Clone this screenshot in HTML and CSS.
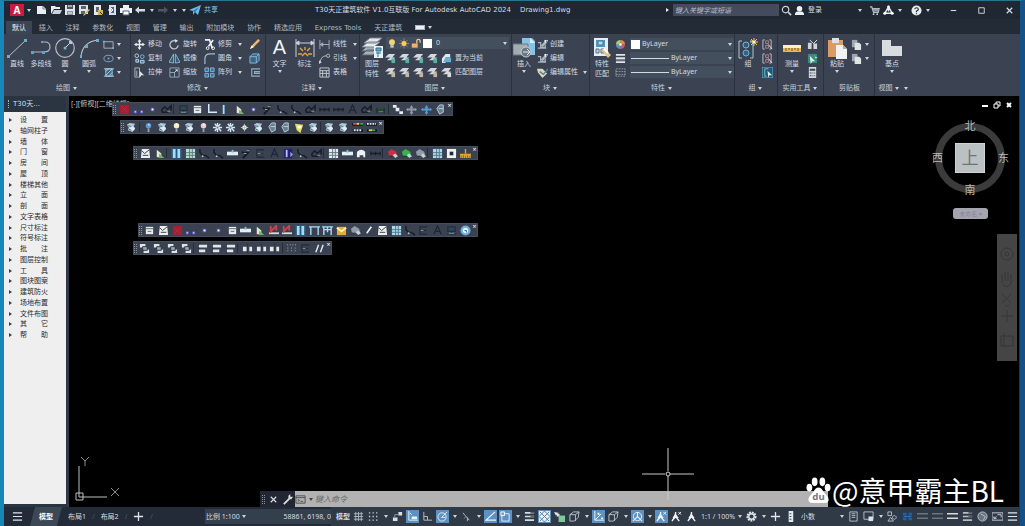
FILE: index.html
```html
<!DOCTYPE html>
<html lang="zh-CN">
<head>
<meta charset="utf-8">
<title>T30天正建筑软件 - Drawing1.dwg</title>
<link rel="stylesheet" href="styles.css">
</head>
<body>
<svg class="defs" aria-hidden="true">
<defs>
<!-- file icons -->
<symbol id="new" viewBox="0 0 12 12"><path d="M1 2h6l3 3v5H1z" fill="#e9eef2"/><path d="M7 2v3h3" stroke="#78838e" fill="none"/></symbol>
<symbol id="open" viewBox="0 0 12 12"><path d="M1 10V2h4l1 1h4v2H4z" fill="#e9eef2"/><path d="M4 6h8l-2 4H2z" fill="#c9d2da"/></symbol>
<symbol id="save" viewBox="0 0 12 12"><path d="M1 1h10v10H1z" fill="#e0e5ea"/><path d="M3 1h6v4H3z" fill="#4b5664"/><path d="M3 7h6v4H3z" fill="#8592a0"/><path d="M4 2h4M4 9h4" stroke="#fff"/></symbol>
<symbol id="saveas" viewBox="0 0 12 12"><path d="M1 1h9v9H1z" fill="#dfe3e6"/><path d="M3 2h5v3H3zM3 7h4v3H3z" fill="#596470"/><path d="M6 10l5-5 1 1-5 5-2 1z" fill="#d6b35d"/></symbol>
<symbol id="sheet" viewBox="0 0 12 12"><path d="M2 1h7v10H2z" fill="#e6e9eb"/><path d="M4 3h3v5H4z" fill="#5d6874"/><path d="M6 6h5v5H6z" fill="#d6b44b"/><path d="M8 8l3 3" stroke="#333"/></symbol>
<symbol id="phone" viewBox="0 0 12 12"><path d="M3 1h7v10H3z" fill="#d8e2ec"/><path d="M5 3h3v6H5z" fill="#486784"/><path d="M2 6h5M5 4l2 2-2 2" stroke="#fff" fill="none"/></symbol>
<symbol id="print" viewBox="0 0 12 12"><path d="M3 1h6v3H3zM0 4h12v5H0z" fill="#eef1f3"/><path d="M3 7h6v4H3z" fill="#fff" stroke="#58626e"/></symbol>
<symbol id="undo" viewBox="0 0 12 12"><path d="M1 6l4-3.500V5h6v2.500H5V9.500z" fill="currentColor"/></symbol>
<symbol id="redo" viewBox="0 0 12 12"><path d="M11 6L7 2.500V5H1v2.500h6V9.500z" fill="currentColor"/></symbol>
<symbol id="plane" viewBox="0 0 12 12"><path d="M0 6L12 1 9 11 6 8l-2 3V7z" fill="#68bce8"/><path d="M4 7l6-4-4 5" fill="#2e6f98"/></symbol>
<symbol id="search" viewBox="0 0 12 12"><circle cx="5" cy="5" r="3.500" fill="none" stroke="#cbd3da" stroke-width="1.300"/><path d="M8 8l3 3" stroke="#cbd3da" stroke-width="1.800"/></symbol>
<symbol id="user" viewBox="0 0 12 12"><circle cx="6" cy="4" r="3" fill="#eef1f4"/><path d="M1 11q0-4 3-4h4q3 0 3 4z" fill="#eef1f4"/></symbol>
<symbol id="cart" viewBox="0 0 12 12"><path d="M1 2h2l2 6h5l1-4H4" fill="none" stroke="#b9c2ca" stroke-width="1.400"/><path d="M4 4h7l-1 3H5z" fill="#929daa"/><circle cx="5" cy="10" r="1" fill="#ccd"/><circle cx="9" cy="10" r="1" fill="#ccd"/></symbol>
<symbol id="hub" viewBox="0 0 12 12"><path d="M6 2L2 9h8zM6 3v4" fill="none" stroke="#e7ebee" stroke-width="1.600"/><circle cx="6" cy="2" r="1.500" fill="#fff"/><circle cx="2" cy="9" r="1.700" fill="#fff"/><circle cx="10" cy="9" r="1.700" fill="#fff"/></symbol>
<symbol id="help" viewBox="0 0 12 12"><circle cx="6" cy="6" r="5.500" fill="#e8edf0"/><path d="M4 4.500Q4.500 3 6 3q2 0 2 1.500Q8 6 6 6.500V8M6 9v1" fill="none" stroke="#26303d" stroke-width="1.300"/></symbol>
<symbol id="min" viewBox="0 0 12 12"><path d="M3 6h6" stroke="currentColor" stroke-width="1.200"/></symbol>
<symbol id="max" viewBox="0 0 12 12"><path d="M3 3h6v6H3z" fill="none" stroke="currentColor"/></symbol>
<symbol id="close" viewBox="0 0 12 12"><path d="M3 3l6 6M9 3L3 9" stroke="currentColor" stroke-width="1.300"/></symbol>
<!-- large ribbon icons -->
<symbol id="line" viewBox="0 0 22 22"><path d="M2 20L20 3" stroke="#b9c2ca"/><path d="M1 18h3v3H1zM18 2h3v3h-3z" fill="#73aaca"/></symbol>
<symbol id="pline" viewBox="0 0 22 22"><path d="M11 5h4q5 0 5 5t-6 5H2" fill="none" stroke="#aeb7c0" stroke-width="1.200"/><path d="M11 4h2v2h-2zM1 14h3v3H1zM12 14h3v3h-3z" fill="#659fc5"/></symbol>
<symbol id="circle" viewBox="0 0 22 22"><circle cx="11" cy="11" r="9.300" fill="none" stroke="#b9c0c8" stroke-width="1.200"/><path d="M11 11l5-5" stroke="#d0d9df"/><circle cx="11" cy="11" r="1.500" fill="#73b3da"/><path d="M15 4h3v3h-3z" fill="#a9c9dc"/></symbol>
<symbol id="arc" viewBox="0 0 22 22"><path d="M3 20Q4 5 20 3" fill="none" stroke="#b9c0c8" stroke-width="1.200"/><path d="M2 18h2v3H2zM7 8h3v3H7zM18 2h3v3h-3z" fill="#73aaca"/></symbol>
<symbol id="dim" viewBox="0 0 22 22"><path d="M2 2v18M20 2v18M2 6h18M2 6l3-2v4zM20 6l-3-2v4z" fill="#ccd2d9" stroke="#ccd2d9"/><path d="M11 10v3M6 11l3 3M16 11l-3 3M4 17h4M14 17h4M11 16l-3 3M11 16l3 3" stroke="#e2a53d" stroke-width="1.400"/></symbol>
<symbol id="layers" viewBox="0 0 22 22"><path d="M1 18l5-5h11l-5 5zM1 14l5-5h11l-5 5z" fill="#a8b0b8" stroke="#596370"/><path d="M1 10l6-5h12l-6 5zM3 6l6-5h12l-6 5z" fill="#e6e9eb" stroke="#778391"/><path d="M13 9h9v12h-9z" fill="#e6f1f6"/><path d="M15 11h5v3h-5zM15 16h5M17 15v5" fill="#5dabc7" stroke="#36728b"/></symbol>
<symbol id="insert" viewBox="0 0 22 22"><path d="M9 1h10l3 3v14H9z" fill="#84c4e8"/><path d="M17 1v5h5" fill="#d9f0fc"/><path d="M0 7h15v11H0z" fill="#a3acb3" stroke="#6d7781"/><circle cx="13" cy="15" r="5" fill="#687782" stroke="#c5cfd5"/><path d="M10 15h6M14 12l3 3-3 3" fill="none" stroke="#dfe6ea"/></symbol>
<symbol id="match" viewBox="0 0 22 22"><path d="M3 1h14v18H3z" fill="#e5eef5"/><path d="M5 3h9v7H5z" fill="#4b99ca"/><path d="M7 4h5v4H7zM5 12h3v4H5zM10 12h3v4h-3z" fill="#a7dcf5" stroke="#5c6e7d"/><path d="M10 13l3-2 7 7-3 3z" fill="#e8c181"/><path d="M13 12l4 4" stroke="#fff" stroke-width="2"/></symbol>
<symbol id="group" viewBox="0 0 22 22"><path d="M5 4H2v17h3M13 4h3v17h-3" fill="none" stroke="#a8c4d8"/><circle cx="9" cy="8" r="3" fill="#355b7b" stroke="#7bb1d5"/><circle cx="9" cy="16" r="3" fill="#2b668f" stroke="#6fb0d5"/><path d="M17 1v8M13 5h8M14 2l6 6M20 2l-6 6" stroke="#f4bf65"/><circle cx="17" cy="5" r="1.500" fill="#fff3d4"/></symbol>
<symbol id="measure" viewBox="0 0 22 22"><path d="M2 8h18v7H2z" fill="#e8b45c"/><path d="M2 8h18v3H2z" fill="#fff0bd"/><path d="M5 11v3M8 11v2M11 11v3M14 11v2M17 11v3" stroke="#765c30"/></symbol>
<symbol id="paste" viewBox="0 0 22 22"><path d="M2 3h15v17H2z" fill="#d99d64"/><path d="M6 1h7v5H6z" fill="#dce1e3"/><path d="M10 8h7l4 4v10H10z" fill="#f0f2f3"/><path d="M17 8v4h4" fill="#a4adb6"/></symbol>
<symbol id="base" viewBox="0 0 22 22"><path d="M1 3h9v6h11v10H1z" fill="#d9dcde"/></symbol>
<!-- small ribbon icons -->
<symbol id="rect" viewBox="0 0 12 12"><path d="M1 3h10v7H1z" fill="none" stroke="#aab7c3"/><path d="M0 2h2v2H0zM10 9h2v2h-2z" fill="#65b3df"/></symbol>
<symbol id="ellipse" viewBox="0 0 12 12"><ellipse cx="6" cy="6" rx="5" ry="3.500" fill="none" stroke="#8cacc1"/><path d="M5 5h2v2H5z" fill="#60a9d7"/></symbol>
<symbol id="hatch" viewBox="0 0 12 12"><path d="M3 2h7v8H3z" fill="#46647a" stroke="#8cc9e7"/><path d="M3 5l3-3M3 9l7-7M6 10l4-4M1 2h11M1 10h11" stroke="#a9d3e6"/></symbol>
<symbol id="move" viewBox="0 0 12 12"><path d="M6 1v10M1 6h10" stroke="#e7ecef" stroke-width="1.500"/><path d="M6 0l2 3H4zM6 12L4 9h4zM0 6l3-2v4zM12 6L9 4v4z" fill="#e7ecef"/></symbol>
<symbol id="rotate" viewBox="0 0 12 12"><path d="M10 7a4.500 4.500 0 1 1-3-5" fill="none" stroke="#bdc9d3" stroke-width="1.400"/><path d="M6 0l4 2-3 2z" fill="#d4e3eb"/></symbol>
<symbol id="trim" viewBox="0 0 12 12"><path d="M1 1h5l3 9M10 1L5 8" stroke="#eef1f3" stroke-width="1.800" fill="none"/><circle cx="4" cy="10" r="1.500" fill="none" stroke="#fff"/><circle cx="10" cy="10" r="1.500" fill="none" stroke="#fff"/></symbol>
<symbol id="copy" viewBox="0 0 12 12"><circle cx="3" cy="3" r="2" fill="none" stroke="#c7d0d8"/><circle cx="9" cy="4" r="2" fill="none" stroke="#7bbce1"/><path d="M2 7h3v3H2zM7 8h4v3H7z" fill="#467da2" stroke="#b7d7e9"/></symbol>
<symbol id="mirror" viewBox="0 0 12 12"><path d="M5 1v10L0 10zM7 1v10l5-1z" fill="#355d7b" stroke="#83b9d8"/></symbol>
<symbol id="fillet" viewBox="0 0 12 12"><path d="M1 12V6q0-5 6-5h5" fill="none" stroke="#9fc0d0" stroke-width="1.300"/></symbol>
<symbol id="stretch" viewBox="0 0 12 12"><path d="M1 1h5v10H1zM3 4v6" fill="none" stroke="#aeb9c3"/><path d="M6 4l5 5H8l-2 3z" fill="#dfe5e9"/></symbol>
<symbol id="scale" viewBox="0 0 12 12"><path d="M1 1h10v10H1zM1 6h5v5" fill="none" stroke="#93abbc"/><path d="M6 6l3-3M7 3h2v2" stroke="#dce3e7" fill="none"/></symbol>
<symbol id="array" viewBox="0 0 12 12"><path d="M1 1h4v4H1zM7 1h4v4H7zM1 7h4v4H1zM7 7h4v4H7z" fill="#426f99" stroke="#80b6db"/></symbol>
<symbol id="pencil" viewBox="0 0 12 12"><path d="M1 11l2-4 7-7 2 2-7 7z" fill="#efb86b"/><path d="M3 7l2 2-4 2z" fill="#fff"/></symbol>
<symbol id="box3" viewBox="0 0 12 12"><path d="M1 4l3-3h7v7l-3 3H1zM1 4h7v7M8 4l3-3" fill="#3c6483" stroke="#83bbdf"/></symbol>
<symbol id="offset" viewBox="0 0 12 12"><path d="M12 2H3v8h9M12 5H6v2h6" fill="none" stroke="#91afc0" stroke-width="1.200"/></symbol>
<symbol id="linear" viewBox="0 0 12 12"><path d="M1 1v10M11 1v10M1 6h10M2 6l2-2v4z" fill="#a8b2bc" stroke="#a8b2bc"/></symbol>
<symbol id="leader" viewBox="0 0 12 12"><path d="M1 11Q2 3 8 3" fill="none" stroke="#b5bec7"/><circle cx="10" cy="3" r="1.800" fill="none" stroke="#b5bec7"/><path d="M0 12V8l3 2z" fill="#cbd3da"/></symbol>
<symbol id="table" viewBox="0 0 12 12"><path d="M1 1h10v10H1zM1 4h10M1 7h10M4 4v7M8 4v7" fill="none" stroke="#c6ced5"/></symbol>
<symbol id="bulb" viewBox="0 0 12 12"><circle cx="6" cy="4.500" r="3.500" fill="#f4d575"/><path d="M4 8h4v3H4z" fill="#c9cbcb"/></symbol>
<symbol id="sun" viewBox="0 0 12 12"><path d="M6 0v12M0 6h12M2 2l8 8M10 2l-8 8" stroke="#ac9346"/><circle cx="6" cy="6" r="3" fill="#f6cf54"/></symbol>
<symbol id="lock" viewBox="0 0 12 12"><path d="M1 6h7v5H1z" fill="#f2b35c"/><path d="M7 6V3q0-2 2-2t2 2v2" fill="none" stroke="#f0d09a" stroke-width="1.400"/></symbol>
<symbol id="lay" viewBox="0 0 12 12"><path d="M0 5l4-4h7L8 5zM2 8l4-3h5L8 8z" fill="#d2d8dc"/><path d="M7 6h4v5H7z" fill="currentColor"/></symbol>
<symbol id="laycur" viewBox="0 0 12 12"><path d="M1 6l4-5h5v4H5v6H1z" fill="#e1e8eb"/><path d="M5 5h6v5H2z" fill="#65afd8"/></symbol>
<symbol id="create" viewBox="0 0 12 12"><path d="M1 4h3v5h5V6M1 10h9" fill="none" stroke="#a9b4be" stroke-width="1.300"/><path d="M4 7l5-5 2 2-5 5z" fill="#a6b4bf"/><path d="M9 1v3M8 2h4" stroke="#fff"/></symbol>
<symbol id="attr" viewBox="0 0 12 12"><path d="M0 2h6l5 5-5 5-5-6z" fill="#d9d8bf"/><path d="M3 5l4 3 5-6" fill="none" stroke="#607890" stroke-width="1.500"/></symbol>
<symbol id="wheel" viewBox="0 0 12 12"><path d="M6 6V1A5 5 0 0 1 11 6z" fill="#e78648"/><path d="M6 6h5a5 5 0 0 1-5 5z" fill="#d3556b"/><path d="M6 6v5a5 5 0 0 1-5-5z" fill="#5a94d2"/><path d="M6 6H1a5 5 0 0 1 5-5z" fill="#a6ce6c"/><circle cx="6" cy="6" r="1.500" fill="#eee"/></symbol>
<symbol id="weight" viewBox="0 0 12 12"><path d="M1 2h10M1 5.500h10M1 10h10" stroke="#e0e5e8" stroke-width="2"/><path d="M1 7.500h10" stroke="#aab5bf"/></symbol>
<symbol id="ltype" viewBox="0 0 12 12"><path d="M1 2h10v8H1zM1 5h10M1 8h10" fill="none" stroke="#929daa" stroke-dasharray="2 1"/></symbol>
<symbol id="gsel" viewBox="0 0 12 12"><path d="M3 1H1v10h2M8 1h2v10H8" fill="none" stroke="#b9c4cc"/><path d="M4 2h3v3H4zM4 7h3v3H4z" fill="none" stroke="#bd8289"/><path d="M7 6l4 5" stroke="#e5ebef"/></symbol>
<symbol id="gon" viewBox="0 0 12 12"><path d="M0 0h12v12H0z" fill="#26577a" stroke="#70b3da"/><path d="M3 2v8M3 2h4M3 10h2" stroke="#7bc5b2"/><path d="M6 4l5 5H8l-1 3z" fill="#def2eb"/></symbol>
<symbol id="tools" viewBox="0 0 12 12"><path d="M1 4h4v7H1zM7 5h4v6H7z" fill="#cfd4d6"/><path d="M3 1l4 4 4-4" stroke="#e8edf0" fill="none"/></symbol>
<symbol id="qsel" viewBox="0 0 12 12"><path d="M1 1h10v10H1z" fill="#378b7a"/><path d="M3 3l6 6H6l-2 3z" fill="#dfece9"/><path d="M8 1l1 3 3 1-3 1" fill="#b8e1cf"/></symbol>
<symbol id="calc" viewBox="0 0 12 12"><path d="M2 0h8v12H2z" fill="#d5d9dc"/><path d="M3 2h6v2H3zM3 6h2v1H3zM6 6h1v1H6zM8 6h1v1H8zM3 9h2v1H3zM6 9h1v1H6zM8 9h1v1H8z" fill="#3d4752"/></symbol>
<symbol id="pages" viewBox="0 0 12 12"><path d="M1 1h6v8H1z" fill="#9ba7b0"/><path d="M4 4h5l2 2v6H4z" fill="#dfe4e7"/></symbol>
<!-- toolbar icons -->
<symbol id="t-red" viewBox="0 0 12 12"><path d="M1 1h10v10H1z" fill="#a51e32"/><path d="M3 3l6 6M9 3L3 9" stroke="#bd2b3b"/></symbol>
<symbol id="t-dots" viewBox="0 0 12 12"><path d="M1 7h3v3H1zM8 7h3v3H8z" fill="#736be0"/><path d="M2 8h1v1H2zM9 8h1v1H9z" fill="#fff"/></symbol>
<symbol id="t-dot" viewBox="0 0 12 12"><path d="M4 4h4v4H4z" fill="#5d58ae"/><path d="M5 5h2v2H5z" fill="#fff"/></symbol>
<symbol id="t-dark" viewBox="0 0 12 12"><path d="M1 9V6l3-3 3 3 4-4v5M1 9h7" fill="none" stroke="#171e28" stroke-width="1.600"/><path d="M7 8h3" stroke="#8d9a73"/></symbol>
<symbol id="t-span" viewBox="0 0 12 12"><path d="M1 6h10M1 4v4M11 4v4M6 4v4" fill="none" stroke="#18202a" stroke-width="1.500"/></symbol>
<symbol id="t-mon" viewBox="0 0 12 12"><path d="M2 2h8v5H2zM1 10h10M6 7v3" fill="none" stroke="#18333f" stroke-width="1.300"/><path d="M3 9h6" stroke="#8ba1aa"/></symbol>
<symbol id="t-box" viewBox="0 0 12 12"><path d="M2 2h8v8H2z" fill="#e8e9ea"/><path d="M2 4h8M4 7h4" stroke="#5c6874"/></symbol>
<symbol id="t-l" viewBox="0 0 12 12"><path d="M3 0v9h9" fill="none" stroke="#d8edf8" stroke-width="1.600"/></symbol>
<symbol id="t-i" viewBox="0 0 12 12"><path d="M4 1v10" stroke="#9de1ff" stroke-width="2"/></symbol>
<symbol id="t-tree" viewBox="0 0 12 12"><path d="M3 10V2l5 4v4z" fill="#e4eac9"/><path d="M6 6l5 5H5z" fill="#7ead6e"/></symbol>
<symbol id="t-tool" viewBox="0 0 12 12"><path d="M1 4l3 2 6-4-4 5-4 4" fill="none" stroke="#141d25" stroke-width="2"/><path d="M6 3h4M3 6h3" stroke="#a1aeb1"/></symbol>
<symbol id="t-grn" viewBox="0 0 12 12"><path d="M1 7h10M2 4v6M10 4v6" stroke="#173922" stroke-width="1.500"/><path d="M4 8h5" stroke="#4b9c4e"/></symbol>
<symbol id="t-stair" viewBox="0 0 12 12"><path d="M1 1h4v3H1zM4 4h4v4H4zM8 8h4v3H8z" fill="#e9edf1"/></symbol>
<symbol id="t-move" viewBox="0 0 12 12"><path d="M6 1l2 3H7v1h3V4l2 2-2 2V7H7v2h1l-2 3-2-3h1V7H2v1L0 6l2-2v1h3V4H4z" fill="currentColor"/></symbol>
<symbol id="t-bulb" viewBox="0 0 12 12"><circle cx="6" cy="4" r="3" fill="currentColor"/><path d="M5 7h2v4H5z" fill="#90a2b0"/><path d="M6 2h1v2H6z" fill="#fff"/></symbol>
<symbol id="t-layer" viewBox="0 0 12 12"><path d="M1 3l3-2 6 1-2 3 2 2-3 4-5-2 1-3z" fill="#b4cad7"/><circle cx="7" cy="7" r="2.500" fill="#e1edf4"/><path d="M2 4l4 1M3 8l3 1" stroke="#456d87"/></symbol>
<symbol id="t-snow" viewBox="0 0 12 12"><path d="M6 1v10M1 6h10M3 2l7 8M9 2L3 10" stroke="#d3e5ee" stroke-width="1.600"/><path d="M5 5h2v2H5z" fill="#5f7f92"/></symbol>
<symbol id="t-star" viewBox="0 0 12 12"><circle cx="6" cy="6" r="2.500" fill="#f5f6e4"/><path d="M6 2v8M2 6h8" stroke="#bfc7bc"/></symbol>
<symbol id="t-lock" viewBox="0 0 12 12"><path d="M2 5l3-4h4v8l-4 2zM4 5h5" fill="#677f93" stroke="#bdd0dc"/></symbol>
<symbol id="t-yel" viewBox="0 0 12 12"><path d="M1 2l9 1-3 9-4-3z" fill="#e5dc5b"/><path d="M4 4h4v3H4z" fill="#fff"/></symbol>
<symbol id="t-bars" viewBox="0 0 12 12"><path d="M0 1h12v3H0zM1 8h11v3H1z" fill="#101820"/><path d="M1 2h4" stroke="#df4145" stroke-width="2"/><path d="M5 2h3" stroke="#e9d549" stroke-width="2"/><path d="M9 2h3" stroke="#39a75e" stroke-width="2"/><path d="M2 9h9" stroke="#e6eaed" stroke-width="2" stroke-dasharray="2 1"/></symbol>
<symbol id="t-bars2" viewBox="0 0 12 12"><path d="M0 1h12v3H0zM1 8h11v3H1z" fill="#101820"/><path d="M1 2h10" stroke="#e6eaed" stroke-width="2" stroke-dasharray="2 1"/><path d="M3 9h4" stroke="#e9d549" stroke-width="2"/><path d="M7 9h3" stroke="#39a75e" stroke-width="2"/></symbol>
<symbol id="t-face" viewBox="0 0 12 12"><path d="M2 1h8l1 10H1z" fill="#eceeef"/><path d="M2 3l3 3 5-4M3 8h6" stroke="#303a40" fill="none"/></symbol>
<symbol id="t-pause" viewBox="0 0 12 12"><path d="M0 0h12v12H0z" fill="#265777"/><path d="M2 1h3v10H2zM7 1h3v10H7z" fill="#a3dcfa"/></symbol>
<symbol id="t-grid" viewBox="0 0 12 12"><path d="M1 1h10v10H1z" fill="currentColor"/><path d="M1 5h10M1 8h10M5 1v10M8 1v10" stroke="#5c7683"/></symbol>
<symbol id="t-join" viewBox="0 0 12 12"><path d="M1 1v4l3 3h3l4 3M3 8h5" fill="none" stroke="#151d27" stroke-width="1.500"/><circle cx="4" cy="9" r="1" fill="#b9c4cc"/></symbol>
<symbol id="t-wide" viewBox="0 0 12 12"><path d="M0 4h12v4H0z" fill="#e0eef6"/><path d="M5 2h2v3H5z" fill="#8fb7cf"/></symbol>
<symbol id="t-e" viewBox="0 0 12 12"><path d="M10 2H2v8h8M3 6h6" fill="none" stroke="#202b37" stroke-width="1.200"/><path d="M3 6h3" stroke="#8896a3"/></symbol>
<symbol id="t-a" viewBox="0 0 12 12"><path d="M2 10l4-9 4 9M4 7h4" fill="none" stroke="#1c2732" stroke-width="1.300"/></symbol>
<symbol id="t-blue" viewBox="0 0 12 12"><path d="M1 1h9v10H1z" fill="#202173"/><path d="M3 2h2v8H3z" fill="#b8bfe8"/><path d="M8 4l3 3-3 3" fill="#9496ee"/></symbol>
<symbol id="t-chair" viewBox="0 0 12 12"><path d="M1 10V4q5-4 9 0v6H8V8H4v2z" fill="#eef1f3"/></symbol>
<symbol id="t-color" viewBox="0 0 12 12"><path d="M1 4l4-3 5 3 1 4-5 2-4-2z" fill="currentColor"/><path d="M6 8l3-2 3 3-3 2z" fill="#c7d0d4"/><path d="M3 9h4" stroke="#161f28"/></symbol>
<symbol id="t-white" viewBox="0 0 12 12"><path d="M1 1h10v10H1z" fill="#f1f3f3"/><path d="M4 4h4v4H4z" fill="#202a33"/></symbol>
<symbol id="t-gold" viewBox="0 0 12 12"><path d="M6 1v5M1 11V8h2v3M5 11V8h2v3M9 11V8h2v3M0 7h12" fill="none" stroke="#d8a637" stroke-width="1.500"/></symbol>
<symbol id="t-redp" viewBox="0 0 12 12"><path d="M1 9h11" stroke="#d6dde1" stroke-width="2"/><path d="M3 1v6l6-6v5" fill="none" stroke="#d24247" stroke-width="2"/></symbol>
<symbol id="t-gate" viewBox="0 0 12 12"><path d="M2 11V2h8v9M0 2h12" fill="none" stroke="#a6def7" stroke-width="1.500"/></symbol>
<symbol id="t-gate2" viewBox="0 0 12 12"><path d="M2 11V2h8v9M0 2h12M6 2v6M2 5h8" fill="none" stroke="#a6def7" stroke-width="1.500"/></symbol>
<symbol id="t-mail" viewBox="0 0 12 12"><path d="M1 2h10v9H1z" fill="#e5ac38"/><path d="M1 3l5 4 5-4" fill="none" stroke="#fff0bd" stroke-width="2"/></symbol>
<symbol id="t-slash" viewBox="0 0 12 12"><path d="M3 9l5-7" stroke="#ecf2f5" stroke-width="1.800"/></symbol>
<symbol id="t-info" viewBox="0 0 12 12"><circle cx="6" cy="6" r="5.500" fill="#6caee0"/><circle cx="6" cy="6" r="3" fill="#e3f3ff"/><path d="M5 6h2v2" stroke="#225a89" fill="none"/></symbol>
<symbol id="t-order" viewBox="0 0 12 12"><path d="M1 1h6v4H1zM5 7h6v4H5z" fill="#dfe4e8"/><path d="M4 4h5v4H4z" fill="#9ca8b2" stroke="#29313d"/></symbol>
<symbol id="t-align" viewBox="0 0 12 12"><path d="M2 1v10" stroke="#202a34"/><path d="M2 2h9v3H2zM2 7h7v3H2z" fill="#dfe5e8"/></symbol>
<symbol id="t-dist" viewBox="0 0 12 12"><path d="M1 4h4v5H1zM8 4h3v5H8z" fill="#e6e9eb"/><path d="M6 1v10" stroke="#202830" stroke-dasharray="1 1"/></symbol>
<symbol id="t-pts" viewBox="0 0 12 12"><path d="M1 2h10M2 5v6M6 5v6M10 5v6" stroke="#b4bdc6" stroke-dasharray="1 2"/></symbol>
<symbol id="t-par" viewBox="0 0 12 12"><path d="M2 10l3-8M7 10l3-8" stroke="#e2e7eb" stroke-width="1.600"/></symbol>
<!-- status icons -->
<symbol id="menu" viewBox="0 0 12 12"><path d="M1 2h10M1 6h10M1 10h10" stroke="#dfe5e9" stroke-width="1.300"/></symbol>
<symbol id="plus" viewBox="0 0 12 12"><path d="M6 1v10M1 6h10" stroke="#dfe5e9" stroke-width="1.400"/></symbol>
<symbol id="s-grid" viewBox="0 0 12 12"><path d="M1 3h10M1 6h10M1 9h10M3 1v10M6 1v10M9 1v10" stroke="#aeb8c1" stroke-width="1"/></symbol>
<symbol id="s-dots" viewBox="0 0 12 12"><path d="M1 2h11M1 6h11M1 10h11" stroke="#c9d1d8" stroke-width="1.400" stroke-dasharray="1.400 2.500"/></symbol>
<symbol id="s-inf" viewBox="0 0 12 12"><path d="M7 1h4v4H7zM1 7h5v4H1z" fill="#d8dfe5"/><path d="M3 7V4h4" fill="none" stroke="#8e9aa6"/></symbol>
<symbol id="s-dyn" viewBox="0 0 12 12"><path d="M2 0v10h10" fill="none" stroke="#e8f4fc"/><path d="M5 6h6v3H5z" fill="#e7f3fb"/><path d="M3 2l2 2" stroke="#fff"/></symbol>
<symbol id="s-ortho" viewBox="0 0 12 12"><path d="M2 1v9h9M2 6h4v4" fill="none" stroke="#b9c2ca"/></symbol>
<symbol id="s-polar" viewBox="0 0 12 12"><circle cx="5.500" cy="6.500" r="4.500" fill="none" stroke="#e3f0f8"/><path d="M5 7l6-6M5 7h4" stroke="#e3f0f8"/></symbol>
<symbol id="s-iso" viewBox="0 0 12 12"><path d="M2 2l7 8M7 7v4" stroke="#b9c2ca"/><path d="M3 8l3-2" stroke="#74808c"/></symbol>
<symbol id="s-angle" viewBox="0 0 12 12"><path d="M11 1L1 10h11" fill="none" stroke="#eff7fc" stroke-width="1.300"/></symbol>
<symbol id="s-snap" viewBox="0 0 12 12"><path d="M2 3h8v8H2z" fill="none" stroke="#e4f1fa"/><path d="M1 1h4v4H1z" fill="#6fa4d0" stroke="#fff"/></symbol>
<symbol id="s-lines" viewBox="0 0 12 12"><path d="M1 2h10M1 6h10M1 10h10" stroke="#d7dde2" stroke-width="1.800"/><path d="M7 2h4M7 6h4" stroke="#5b6673" stroke-width="2"/></symbol>
<symbol id="s-check" viewBox="0 0 12 12"><path d="M0 0h12v12H0z" fill="#e5eff6"/><path d="M1 1l10 10M6 0l6 6M0 6l6 6M11 1L1 11M6 0L0 6M12 6l-6 6" stroke="#4e7da2"/></symbol>
<symbol id="s-cycle" viewBox="0 0 12 12"><path d="M0 1l5 1-3 3zM3 3h3v3H3z" fill="#dde3e7"/><path d="M5 5h7v7H5z" fill="#7fca9a"/></symbol>
<symbol id="s-cube" viewBox="0 0 12 12"><path d="M1 4l4-3h6l-1 6-4 4H1zM1 4h6l4-3M7 4v7" fill="none" stroke="#bdc7cf"/></symbol>
<symbol id="s-ucs" viewBox="0 0 12 12"><path d="M2 0v10h10M2 10l7-7" fill="none" stroke="#f1f8fc"/><path d="M5 2h2v2H5zM9 7h2v2H9z" fill="#fff"/></symbol>
<symbol id="s-gizmo" viewBox="0 0 12 12"><circle cx="6" cy="6" r="4.500" fill="none" stroke="#e9f3fa"/><path d="M1 11l5-5 5 5M6 1v5" fill="none" stroke="#e9f3fa" stroke-width="1.200"/></symbol>
<symbol id="s-man" viewBox="0 0 12 12"><path d="M6 1v5L2 11M6 6l4 5M6 4l-2 3h4z" fill="#edf3f7" stroke="#edf3f7" stroke-width="1.500"/></symbol>
<symbol id="s-man2" viewBox="0 0 12 12"><path d="M5 1v5L1 11M5 6l4 5M5 4L3 7h4z" fill="#edf3f7" stroke="#edf3f7" stroke-width="1.500"/><path d="M8 1l3 3M11 1L8 4" stroke="#edf3f7"/></symbol>
<symbol id="s-gear" viewBox="0 0 12 12"><circle cx="6" cy="6" r="4.500" fill="none" stroke="#e4e9ed" stroke-width="2" stroke-dasharray="2 1"/><circle cx="6" cy="6" r="3" fill="none" stroke="#e4e9ed" stroke-width="1.500"/></symbol>
<symbol id="s-unit" viewBox="0 0 12 12"><path d="M4 0h5v12H4z" fill="#e5eaed"/><path d="M5 3h2M5 6h2M5 9h2" stroke="#34404c"/></symbol>
<symbol id="s-page" viewBox="0 0 12 12"><path d="M2 1h8v10H2zM4 3h4M4 5h4M4 7h4" fill="none" stroke="#b9c3cb"/></symbol>
<symbol id="s-win" viewBox="0 0 12 12"><path d="M1 1h10v8H1z" fill="none" stroke="#b9c3cb"/><path d="M6 6h5v5H6z" fill="#dce3e7"/></symbol>
<symbol id="s-shapes" viewBox="0 0 12 12"><path d="M1 1h4v4H1zM8 5a2 2 0 1 0 .1 0M4 7l3 4H1z" fill="none" stroke="#b9c3cb"/></symbol>
<symbol id="s-blue" viewBox="0 0 12 12"><path d="M1 2h4v3H1zM7 2h4v3H7zM1 7h4v3H1zM7 7h4v3H7z" fill="#235f9b"/><path d="M2 6h8" stroke="#3579b8"/></symbol>
<symbol id="s-bars" viewBox="0 0 12 12"><path d="M0 3h12M0 8h12" stroke="currentColor" stroke-width="1.600"/></symbol>
<symbol id="s-disc" viewBox="0 0 12 12"><circle cx="6" cy="6" r="5" fill="#68737f" stroke="#b9c3cb"/><path d="M4 3l5 3-2 4" fill="none" stroke="#b9c3cb"/></symbol>
<symbol id="s-full" viewBox="0 0 12 12"><path d="M0 2h12v8H0zM6 4h4v3M2 8l3-2M2 6v2h3" fill="none" stroke="#cbd3da"/></symbol>
<symbol id="wrench" viewBox="0 0 12 12"><path d="M2 11l6-6" stroke="#d9dde1" stroke-width="2"/><path d="M7 5V2l2-2v3h3l-2 3z" fill="#d9dde1"/></symbol>
</defs>
</svg>

<div class="window">
<header class="titlebar">
  <button class="logo" aria-label="应用程序"><b>A</b></button><i class="dd"></i>
  <div class="quick">
    <button><svg><use href="#new"/></svg></button><button><svg><use href="#open"/></svg></button><button><svg><use href="#save"/></svg></button><button><svg><use href="#saveas"/></svg></button><button><svg><use href="#sheet"/></svg></button><button><svg><use href="#phone"/></svg></button><button><svg><use href="#print"/></svg></button><button><svg><use href="#undo"/></svg></button><i class="dd"></i><button class="dim"><svg><use href="#redo"/></svg></button><i class="dd"></i><i class="dd"></i>
    <button class="share"><svg><use href="#plane"/></svg>共享</button>
  </div>
  <h1><span>T30天正建筑软件 V1.0互联版 For Autodesk AutoCAD 2024</span><span>Drawing1.dwg</span></h1>
  <div class="account">
    <i class="play"></i><input type="search" placeholder="键入关键字或短语" aria-label="搜索">
    <button><svg><use href="#search"/></svg></button><button class="login"><svg><use href="#user"/></svg>登录</button><i class="dd"></i>
    <button class="cart"><svg><use href="#cart"/></svg></button><button><svg><use href="#hub"/></svg></button><i class="dd"></i>
    <button class="help"><svg><use href="#help"/></svg></button><i class="dd"></i>
  </div>
  <div class="winctl"><button aria-label="最小化"><svg><use href="#min"/></svg></button><button aria-label="最大化"><svg><use href="#max"/></svg></button><button aria-label="关闭"><svg><use href="#close"/></svg></button></div>
</header>

<nav class="tabs">
  <button class="on">默认</button><button>插入</button><button>注释</button><button>参数化</button><button>视图</button><button>管理</button><button>输出</button><button>附加模块</button><button>协作</button><button>精选应用</button><button>Express Tools</button><button>天正建筑</button><button class="toggle" aria-label="最小化功能区"><i class="pill"></i><i class="dd"></i></button>
</nav>

<section class="ribbon">
  <div class="panel draw"><div class="body">
    <button class="big"><svg><use href="#line"/></svg>直线</button><button class="big"><svg><use href="#pline"/></svg>多段线</button><button class="big"><svg><use href="#circle"/></svg>圆<i class="dd"></i></button><button class="big"><svg><use href="#arc"/></svg>圆弧<i class="dd"></i></button>
    <div class="stack"><button><svg><use href="#rect"/></svg><i class="dd"></i></button><button><svg><use href="#ellipse"/></svg><i class="dd"></i></button><button><svg><use href="#hatch"/></svg><i class="dd"></i></button></div>
  </div><button class="cap">绘图<i class="dd"></i></button></div>

  <div class="panel modify"><div class="body">
    <div class="stack"><button><svg><use href="#move"/></svg>移动</button><button><svg><use href="#copy"/></svg>复制</button><button><svg><use href="#stretch"/></svg>拉伸</button></div>
    <div class="stack"><button><svg><use href="#rotate"/></svg>旋转</button><button><svg><use href="#mirror"/></svg>镜像</button><button><svg><use href="#scale"/></svg>缩放</button></div>
    <div class="stack"><button><svg><use href="#trim"/></svg>修剪<i class="dd"></i></button><button><svg><use href="#fillet"/></svg>圆角<i class="dd"></i></button><button><svg><use href="#array"/></svg>阵列<i class="dd"></i></button></div>
    <div class="stack"><button><svg><use href="#pencil"/></svg></button><button><svg><use href="#box3"/></svg></button><button><svg><use href="#offset"/></svg></button></div>
  </div><button class="cap">修改<i class="dd"></i></button></div>

  <div class="panel annot"><div class="body">
    <button class="big"><span class="glyph">A</span>文字<i class="dd"></i></button><button class="big"><svg><use href="#dim"/></svg>标注</button>
    <div class="stack"><button><svg><use href="#linear"/></svg>线性<i class="dd"></i></button><button><svg><use href="#leader"/></svg>引线<i class="dd"></i></button><button><svg><use href="#table"/></svg>表格</button></div>
  </div><button class="cap">注释<i class="dd"></i></button></div>

  <div class="panel layer"><div class="body">
    <button class="big"><svg><use href="#layers"/></svg>图层<br>特性</button>
    <div class="stack">
      <label class="combo"><svg><use href="#bulb"/></svg><svg><use href="#sun"/></svg><svg><use href="#lock"/></svg><i class="swatch"></i><select aria-label="图层"><option>0</option></select><i class="dd"></i></label>
      <div class="row teal"><button><svg><use href="#lay"/></svg></button><button><svg><use href="#lay"/></svg></button><button><svg><use href="#lay"/></svg></button><button><svg><use href="#lay"/></svg></button><button><svg><use href="#laycur"/></svg>置为当前</button></div>
      <div class="row sand"><button><svg><use href="#lay"/></svg></button><button><svg><use href="#lay"/></svg></button><button><svg><use href="#lay"/></svg></button><button><svg><use href="#lay"/></svg></button><button><svg><use href="#lay"/></svg>匹配图层</button></div>
    </div>
  </div><button class="cap">图层<i class="dd"></i></button></div>

  <div class="panel block"><div class="body">
    <button class="big"><svg><use href="#insert"/></svg>插入<i class="dd"></i></button>
    <div class="stack"><button><svg><use href="#create"/></svg>创建</button><button><svg><use href="#create"/></svg>编辑</button><button><svg><use href="#attr"/></svg>编辑属性<i class="dd"></i></button></div>
  </div><button class="cap">块<i class="dd"></i></button></div>

  <div class="panel props"><div class="body">
    <button class="big"><svg><use href="#match"/></svg>特性<br>匹配</button>
    <div class="stack">
      <div class="row"><svg><use href="#wheel"/></svg><label class="combo"><i class="swatch"></i><select aria-label="颜色"><option>ByLayer</option></select><i class="dd"></i></label></div>
      <div class="row"><svg><use href="#weight"/></svg><label class="combo"><i class="rule"></i><select aria-label="线宽"><option>ByLayer</option></select><i class="dd"></i></label></div>
      <div class="row"><svg><use href="#ltype"/></svg><label class="combo"><i class="rule"></i><select aria-label="线型"><option>ByLayer</option></select><i class="dd"></i></label></div>
    </div>
  </div><button class="cap">特性<i class="dd"></i></button></div>

  <div class="panel grp"><div class="body">
    <button class="big"><svg><use href="#group"/></svg>组</button>
    <div class="stack"><button><svg><use href="#gsel"/></svg></button><button><svg><use href="#gsel"/></svg></button><button><svg><use href="#gon"/></svg></button></div>
  </div><button class="cap">组<i class="dd"></i></button></div>

  <div class="panel util"><div class="body">
    <button class="big"><svg><use href="#measure"/></svg>测量<i class="dd"></i></button>
    <div class="stack"><button><svg><use href="#tools"/></svg></button><button><svg><use href="#qsel"/></svg></button><button><svg><use href="#calc"/></svg></button></div>
  </div><button class="cap">实用工具<i class="dd"></i></button></div>

  <div class="panel clip"><div class="body">
    <button class="big"><svg><use href="#paste"/></svg>粘贴<i class="dd"></i></button>
    <div class="stack"><button><svg><use href="#pages"/></svg><i class="dd"></i></button><button><svg><use href="#pages"/></svg><i class="dd"></i></button></div>
  </div><button class="cap">剪贴板</button></div>

  <div class="panel view"><div class="body">
    <button class="big"><svg><use href="#base"/></svg>基点<i class="dd"></i></button>
  </div><button class="cap">视图<i class="dd"></i><i class="dd"></i></button></div>
</section>

<main class="work">
  <aside class="side">
    <h2>T30天...</h2>
    <ul>
      <li><button>设 置</button></li><li><button>轴网柱子</button></li><li><button>墙 体</button></li><li><button>门 窗</button></li><li><button>房 间</button></li><li><button>屋 顶</button></li><li><button>楼梯其他</button></li><li><button>立 面</button></li><li><button>剖 面</button></li><li><button>文字表格</button></li><li><button>尺寸标注</button></li><li><button>符号标注</button></li><li><button>批 注</button></li><li><button>图层控制</button></li><li><button>工 具</button></li><li><button>图块图案</button></li><li><button>建筑防火</button></li><li><button>场地布置</button></li><li><button>文件布图</button></li><li><button>其 它</button></li><li><button>帮 助</button></li>
    </ul>
  </aside>

  <div class="canvas">
    <span class="viewlabel">[-][俯视][二维线框]</span>

    <div class="toolbar tb1"><i class="grip"></i><button><svg><use href="#t-red"/></svg></button><button><svg><use href="#t-dots"/></svg></button><button><svg><use href="#t-dot"/></svg></button><button><svg><use href="#t-dark"/></svg></button><i class="sep"></i><button><svg><use href="#t-mon"/></svg></button><button><svg><use href="#t-box"/></svg></button><button><svg><use href="#t-l"/></svg></button><button><svg><use href="#t-i"/></svg></button><button><svg><use href="#t-tree"/></svg></button><button><svg><use href="#t-dot"/></svg></button><button><svg><use href="#t-tool"/></svg></button><button><svg><use href="#t-join"/></svg></button><button><svg><use href="#t-join"/></svg></button><button><svg><use href="#t-dark"/></svg></button><button><svg><use href="#t-span"/></svg></button><button><svg><use href="#t-span"/></svg></button><button><svg><use href="#t-a"/></svg></button><button><svg><use href="#t-dark"/></svg></button><button><svg><use href="#t-grn"/></svg></button><i class="sep"></i><button><svg><use href="#t-stair"/></svg></button><button class="c-gray"><svg><use href="#t-move"/></svg></button><button class="c-blue"><svg><use href="#t-move"/></svg></button><button><svg><use href="#t-lock"/></svg></button><button class="x" aria-label="关闭">×</button></div>

    <div class="toolbar tb2"><i class="grip"></i><button><svg><use href="#t-layer"/></svg></button><i class="sep"></i><button class="c-blue"><svg><use href="#t-bulb"/></svg></button><button><svg><use href="#t-layer"/></svg></button><button class="c-yel"><svg><use href="#t-bulb"/></svg></button><button><svg><use href="#t-layer"/></svg></button><button class="c-pink"><svg><use href="#t-bulb"/></svg></button><button><svg><use href="#t-snow"/></svg></button><button><svg><use href="#t-snow"/></svg></button><button><svg><use href="#t-star"/></svg></button><button><svg><use href="#t-layer"/></svg></button><button><svg><use href="#t-lock"/></svg></button><button><svg><use href="#t-lock"/></svg></button><button><svg><use href="#t-yel"/></svg></button><button><svg><use href="#t-layer"/></svg></button><i class="sep"></i><button><svg><use href="#t-layer"/></svg></button><button><svg><use href="#t-layer"/></svg></button><button><svg><use href="#t-bars"/></svg></button><button><svg><use href="#t-bars2"/></svg></button><button class="x" aria-label="关闭">×</button></div>

    <div class="toolbar tb3"><i class="grip"></i><button><svg><use href="#t-face"/></svg></button><button><svg><use href="#t-tree"/></svg></button><i class="sep"></i><button><svg><use href="#t-pause"/></svg></button><button class="c-mint"><svg><use href="#t-grid"/></svg></button><button><svg><use href="#t-join"/></svg></button><button><svg><use href="#t-join"/></svg></button><button><svg><use href="#t-wide"/></svg></button><button><svg><use href="#t-tool"/></svg></button><button><svg><use href="#t-e"/></svg></button><button><svg><use href="#t-a"/></svg></button><button><svg><use href="#t-blue"/></svg></button><button><svg><use href="#t-join"/></svg></button><button><svg><use href="#t-dark"/></svg></button><i class="sep"></i><button class="c-white"><svg><use href="#t-grid"/></svg></button><button><svg><use href="#t-wide"/></svg></button><button><svg><use href="#t-chair"/></svg></button><button><svg><use href="#t-span"/></svg></button><i class="sep"></i><button class="c-red"><svg><use href="#t-color"/></svg></button><button class="c-green"><svg><use href="#t-color"/></svg></button><button class="c-gray"><svg><use href="#t-color"/></svg></button><i class="sep"></i><button class="c-sky"><svg><use href="#t-grid"/></svg></button><button><svg><use href="#t-white"/></svg></button><button><svg><use href="#t-gold"/></svg></button><button class="x" aria-label="关闭">×</button></div>

    <div class="toolbar tb4"><i class="grip"></i><button><svg><use href="#t-box"/></svg></button><button><svg><use href="#t-face"/></svg></button><button><svg><use href="#t-red"/></svg></button><button><svg><use href="#t-dots"/></svg></button><button><svg><use href="#t-dot"/></svg></button><button><svg><use href="#t-dot"/></svg></button><button><svg><use href="#t-box"/></svg></button><button><svg><use href="#t-wide"/></svg></button><button><svg><use href="#t-tree"/></svg></button><button><svg><use href="#t-redp"/></svg></button><button><svg><use href="#t-redp"/></svg></button><button><svg><use href="#t-pause"/></svg></button><button><svg><use href="#t-gate"/></svg></button><button><svg><use href="#t-gate2"/></svg></button><button><svg><use href="#t-mail"/></svg></button><button class="c-gray"><svg><use href="#t-color"/></svg></button><button><svg><use href="#t-slash"/></svg></button><button><svg><use href="#t-face"/></svg></button><button class="c-sky"><svg><use href="#t-grid"/></svg></button><button><svg><use href="#t-join"/></svg></button><button><svg><use href="#t-e"/></svg></button><button><svg><use href="#t-a"/></svg></button><button><svg><use href="#t-mon"/></svg></button><button><svg><use href="#t-info"/></svg></button><button class="x" aria-label="关闭">×</button></div>

    <div class="toolbar tb5"><i class="grip"></i><button><svg><use href="#t-order"/></svg></button><button><svg><use href="#t-order"/></svg></button><button><svg><use href="#t-order"/></svg></button><button><svg><use href="#t-order"/></svg></button><i class="sep"></i><button><svg><use href="#t-align"/></svg></button><button><svg><use href="#t-align"/></svg></button><button><svg><use href="#t-align"/></svg></button><i class="sep"></i><button><svg><use href="#t-dist"/></svg></button><button><svg><use href="#t-dist"/></svg></button><button><svg><use href="#t-dist"/></svg></button><i class="sep"></i><button><svg><use href="#t-pts"/></svg></button><button><svg><use href="#t-e"/></svg></button><button><svg><use href="#t-par"/></svg></button><button class="x" aria-label="关闭">×</button></div>

    <div class="docctl"><button aria-label="最小化"><svg viewBox="0 0 8 8"><path d="M1 5h6" stroke="#fff" stroke-width="2"/></svg></button><button aria-label="还原"><svg viewBox="0 0 8 8"><path d="M1 3h4v4H1zM3 3V1h4v4H5" fill="none" stroke="#fff"/></svg></button><button aria-label="关闭"><svg viewBox="0 0 8 8"><path d="M2 2l4 4M6 2L2 6" stroke="#fff" stroke-width="2"/></svg></button></div>

    <div class="cube"><span class="n">北</span><span class="w">西</span><button>上</button><span class="e">东</span><span class="s">南</span></div>
    <button class="wcs">未命名 ▾</button>
    <div class="navbar">
      <svg viewBox="0 0 20 126"><g fill="none" stroke="#363636"><circle cx="10" cy="20" r="6"/><circle cx="10" cy="20" r="2"/><path d="M5 40v9M8 38v9M11 38v9M14 40v9q-3 6-8 2M5 60l9 9M14 60l-9 9M8 72h4M4 82h12M10 76v12M4 102h12v10H4zM7 99v13"/></g></svg>
    </div>

    <svg class="ucs" viewBox="0 0 48 48"><path d="M5 10v27M9 41h24M2 37h7v7H2zM5 37v4h4" fill="none" stroke="#bfbfbf"/><path d="M7 1l4 4 4-4M11 5v5M37 32l8 8M45 32l-8 8" fill="none" stroke="#8d8d8d"/></svg>
    <svg class="cross" viewBox="0 0 52 52"><path d="M26 0v23M26 28v24M0 26h23M28 26h24" stroke="#c9c9c9"/><circle cx="26" cy="26" r="2" fill="none" stroke="#d8d8d8"/></svg>

    <div class="cmd"><i class="grip"></i><button><svg><use href="#close"/></svg></button><button><svg><use href="#wrench"/></svg></button><label><svg viewBox="0 0 12 12"><path d="M1 2h10v8H1zM1 4h10M3 6l2 1-2 1M6 8h3" fill="none" stroke="#4c4c4c"/></svg><i class="dd"></i><input type="text" placeholder="键入命令" aria-label="命令行"></label></div>

    <div class="mark"><svg viewBox="0 0 26 28"><g fill="#fff"><ellipse cx="3.500" cy="11" rx="3" ry="4"/><ellipse cx="9" cy="5" rx="3" ry="4.500"/><ellipse cx="17" cy="5" rx="3" ry="4.500"/><ellipse cx="22.500" cy="11" rx="3" ry="4"/><path d="M13 11q3 0 5 4l5 6q2 6-4 6H7q-6 0-4-6l5-6q2-4 5-4z"/></g><text x="13" y="24" text-anchor="middle">du</text></svg><span>@意甲霸主BL</span></div>
  </div>
</main>

<footer class="status">
  <button class="ham"><svg><use href="#menu"/></svg></button>
  <div class="sheets"><button class="on">模型</button><button>布局1</button><i>/</i><button>布局2</button><i>/</i><button class="add" aria-label="新建布局"><svg><use href="#plus"/></svg></button><i>/</i></div>
  <div class="coords"><button>比例 1:100<i class="dd"></i></button><span>58861, 6198, 0</span></div>
  <div class="modes">
    <button class="txt">模型</button><button><svg><use href="#s-grid"/></svg></button><button><svg><use href="#s-dots"/></svg></button><i class="dd"></i><button><svg><use href="#s-inf"/></svg></button><button class="hl"><svg><use href="#s-dyn"/></svg></button><button><svg><use href="#s-ortho"/></svg></button><button class="hl"><svg><use href="#s-polar"/></svg></button><i class="dd"></i><button><svg><use href="#s-iso"/></svg></button><i class="dd"></i><button class="hl"><svg><use href="#s-angle"/></svg></button><button class="hl"><svg><use href="#s-snap"/></svg></button><i class="dd"></i><button><svg><use href="#s-lines"/></svg></button><button class="hl"><svg><use href="#s-check"/></svg></button><button><svg><use href="#s-cycle"/></svg></button><button><svg><use href="#s-cube"/></svg></button><i class="dd"></i><button class="hl"><svg><use href="#s-ucs"/></svg></button><button><svg><use href="#s-cube"/></svg></button><i class="dd"></i><button class="hl"><svg><use href="#s-gizmo"/></svg></button><i class="dd"></i><button class="hl"><svg><use href="#s-man2"/></svg></button><button><svg><use href="#s-man2"/></svg></button><button><svg><use href="#s-man"/></svg></button>
    <button class="scale">1:1 / 100%</button><i class="dd"></i><button><svg><use href="#s-gear"/></svg></button><i class="dd"></i><button><svg><use href="#plus"/></svg></button><button><svg><use href="#s-unit"/></svg></button>
    <label class="units"><select aria-label="单位"><option>小数</option></select><i class="dd"></i></label>
    <button><svg><use href="#s-page"/></svg></button><button><svg><use href="#s-win"/></svg></button><i class="dd"></i><button><svg><use href="#s-shapes"/></svg></button><button><svg><use href="#s-blue"/></svg></button><button class="dimmer"><svg><use href="#s-bars"/></svg></button><button class="dimmer"><svg><use href="#s-bars"/></svg></button><button><svg><use href="#s-bars"/></svg></button><button class="dimmer"><svg><use href="#s-lines"/></svg></button><button><svg><use href="#s-disc"/></svg></button><button><svg><use href="#s-full"/></svg></button><button><svg><use href="#menu"/></svg></button>
  </div>
</footer>
</div>
</body>
</html>
```
FILE: styles.css
```css
* { box-sizing: border-box; }
html, body { margin: 0; height: 100%; background: #000; }
body { font: 7px/10px "Noto Sans", "Noto Sans CJK SC", sans-serif; color: #d5dbe1; overflow: hidden; }
button, input, select { font: inherit; color: inherit; background: none; border: 0; padding: 0; margin: 0; outline: 0; }
button { display: flex; align-items: center; justify-content: center; white-space: nowrap; flex: none; }
select { appearance: none; min-width: 0; }
svg { display: block; width: 11px; height: 11px; flex: none; }
.defs { position: absolute; width: 0; height: 0; }

/* drop-down arrow */
.dd { width: 9px; height: 5px; flex: none; display: flex; align-items: center; justify-content: center; }
.dd::before { content: ""; border: 2px solid transparent; border-top: 3px solid #cdd4da; border-bottom: 0; }

.window {
  display: flex; flex-direction: column; min-height: 100vh; background: #222b36;
  border-top: 1px solid #2a7391; border-left: 4px solid #1787ba; border-right: 5px solid #155087;
}

/* title bar */
.titlebar { display: flex; align-items: center; height: 18px; flex: none; background: #1f2732; padding-left: 6px; }
.logo { width: 14px; height: 12px; background: #c71c40; color: #fff; font-size: 10px; }
.quick { display: flex; align-items: center; margin-left: 2px; }
.quick button { width: 14px; }
.quick button svg { width: 12px; height: 12px; }
.quick .dim { color: #4d5763; }
.quick button.share { width: auto; gap: 3px; margin-left: 1px; color: #8cc7e8; }
h1 { display: flex; gap: 9px; margin: 0 auto 0 97px; font: 7px/10px "DejaVu Sans", "Noto Sans CJK SC", sans-serif; white-space: nowrap; }
.account { display: flex; align-items: center; }
.account button { width: 14px; }
.account input { width: 106px; height: 12px; background: #444b5d; padding-left: 2px; font-style: italic; color: #ccd2db; }
.account input::placeholder { color: #b7bfca; opacity: 1; }
.account button.login { width: 62px; justify-content: flex-start; gap: 3px; padding-left: 1px; }
.account .cart { margin-left: 3px; }
.account .help { margin-left: 5px; }
.play { border: 2px solid transparent; border-left: 3px solid #e8ecef; border-right: 0; margin-right: 4px; }
.winctl { display: flex; margin-left: 4px; }
.winctl button { width: 28px; padding-left: 6px; }

/* ribbon tabs */
.tabs { display: flex; justify-content: space-between; width: 430px; height: 15px; flex: none; padding: 2px 0 0 2px; font-family: "DejaVu Sans", "Noto Sans CJK SC", sans-serif; }
.tabs button { color: #b1bac4; }
.tabs .on { background: #3b4553; color: #eef2f5; padding: 0 6px; margin-right: -6px; }
.pill { width: 10px; height: 5px; background: #edf0f2; border: 1px solid #aab4be; }

/* ribbon */
.ribbon { display: flex; flex: none; background: #3b4353; }
.panel { display: flex; flex-direction: column; border-right: 1px solid #293240; padding: 3px 0 0 1px; flex: none; }
.body { display: flex; height: 43px; }
.cap { height: 16px; width: 100%; color: #c6ced6; }
.big { flex-direction: column; justify-content: flex-start; width: 24px; line-height: 10px; text-align: center; }
.big svg { width: 22px; height: 22px; }
.glyph { height: 22px; font: 20px/20px "Liberation Sans", sans-serif; color: #f0f3f5; }
.stack { display: flex; flex-direction: column; padding-left: 2px; }
.stack button { height: 14px; gap: 3px; justify-content: flex-start; }
.row { display: flex; align-items: center; height: 14px; }
.draw { width: 127px; }
.draw .stack button { gap: 0; }
.modify { width: 135px; }
.modify .stack:nth-child(-n+2) { width: 35px; }
.modify .stack:nth-child(3) { width: 45px; }
.annot { width: 94px; }
.annot .big { width: 25px; }
.layer { width: 152px; }
.layer .big, .block .big, .props .big { width: 22px; }
.row button { width: 14px; }
.row.teal { color: #53b6a3; }
.row.sand { color: #c6b49a; }
.row button:last-child { width: auto; color: #d5dbe1; }
.combo { display: flex; align-items: center; height: 12px; margin-bottom: 2px; background: #444f5e; }
.layer .combo { width: 123px; gap: 2px; padding-left: 1px; margin-left: 1px; }
.combo select { flex: 1; padding-left: 2px; }
.combo svg { width: 10px; height: 11px; }
.swatch { width: 9px; height: 9px; background: #fff; flex: none; }
.block { width: 78px; }
.block .stack button { gap: 2px; }
.props { width: 145px; }
.props .row { gap: 4px; }
.props .combo { width: 104px; margin-bottom: 0; padding-left: 1px; }
.rule { width: 38px; height: 1px; background: #d4dae0; }
.grp { width: 43px; }
.util { width: 46px; }
.util .big { width: 26px; }
.clip { width: 51px; }
.clip .stack button { gap: 0; }
.view { border: 0; width: 38px; }
.view .big { width: 32px; }

/* work area */
.work { display: flex; flex: 1; min-height: 0; }
aside.side { width: 65px; flex: none; display: flex; flex-direction: column; padding-bottom: 3px; border-right: 3px solid #303946; background: #2b3441; }
h2 { margin: 0; height: 16px; font: 7px/16px "DejaVu Sans", "Noto Sans CJK SC", sans-serif; padding-left: 4px; }
h2::before { content: ""; border-left: 1px dotted #aab3bd; margin-right: 4px; }
.side ul { flex: 1; margin: 0; padding: 2px 0 0; list-style: none; background: #efefef; color: #2c2c2c; }
.side li { height: 11px; display: flex; align-items: center; padding-left: 5px; gap: 8px; }
.side li:nth-child(4n) { height: 10px; }
.side li::before { content: ""; border: 2px solid transparent; border-left: 3px solid #29435e; border-right: 0; }
.side li button { display: block; width: 28px; text-align-last: justify; line-height: 10px; }

.canvas { position: relative; flex: 1; background: #000; border-right: 1px solid #273344; }
.viewlabel { position: absolute; left: 2px; top: 3px; color: #c4c4c4; }

/* floating toolbars */
.toolbar { position: absolute; display: flex; align-items: center; height: 14px; padding-right: 5px; background: #3a4150; border: 1px solid #464d5c; }
.toolbar button { flex: 1; height: 12px; min-width: 0; }
.grip { width: 3px; height: 9px; margin-right: 1px; border-left: 1px dotted #8a93a0; border-right: 1px dotted #8a93a0; }
.sep { width: 3px; height: 10px; border-left: 1px solid #262d39; }
.toolbar .x { position: absolute; right: 0; top: 0; width: 5px; height: 6px; color: #fff; line-height: 6px; }
.tb1 { left: 43px; top: 6px; width: 341px; }
.tb2 { left: 51px; top: 24px; width: 264px; }
.tb3 { left: 64px; top: 50px; width: 345px; }
.tb4 { left: 69px; top: 127px; width: 340px; }
.tb5 { left: 64px; top: 145px; width: 199px; }
.c-gray { color: #8f9cab; } .c-blue { color: #5b9bd0; } .c-yel { color: #f3efc0; }
.c-pink { color: #ecccd0; } .c-mint { color: #b6dfca; } .c-white { color: #e6eced; }
.c-red { color: #c72f43; } .c-green { color: #36b54a; } .c-sky { color: #a4dbf5; }

/* view cube and navigation */
.docctl { position: absolute; right: 6px; top: 5px; display: flex; gap: 4px; }
.docctl svg { width: 8px; height: 8px; }
.cube { position: absolute; right: 14px; top: 27px; width: 70px; height: 70px; border: 7px solid #3b3b3b; border-radius: 50%; display: grid; place-items: center; font-size: 11px; line-height: 12px; color: #b9b9b9; }
.cube button { width: 30px; height: 30px; background: #bbc0c2; color: #6c7679; font-size: 17px; line-height: 28px; border: 1px solid #d1d4d5; }
.cube span { position: absolute; }
.n { top: -10px; } .s { bottom: -10px; } .w { left: -10px; } .e { right: -11px; }
.wcs { position: absolute; right: 31px; top: 112px; width: 35px; height: 11px; background: #a5a5b0; border-radius: 3px; color: #858595; font-size: 6px; }
.navbar { position: absolute; right: 2px; top: 138px; width: 20px; height: 127px; background: #454545; }
.navbar svg { width: 20px; height: 126px; }
.ucs { position: absolute; left: 5px; bottom: 3px; width: 48px; height: 48px; }
.cross { position: absolute; left: 573px; bottom: 7px; width: 52px; height: 52px; z-index: 2; }

/* command line */
.cmd { position: absolute; left: 191px; right: 191px; bottom: 0; height: 16px; display: flex; align-items: center; background: #222532; padding-left: 2px; }
.cmd button { width: 14px; }
.cmd label { flex: 1; align-self: stretch; display: flex; align-items: center; margin-left: 1px; background: #b2b2b2; color: #555; }
.cmd label .dd::before { border-top-color: #444; }
.cmd input { flex: 1; font-size: 8px; font-style: italic; }
.cmd input::placeholder { color: #6b6b6b; opacity: 1; }

.mark { position: absolute; right: 15px; bottom: 0; display: flex; align-items: center; gap: 1px; color: #fff; font: 28px/34px "Noto Sans CJK SC", sans-serif; z-index: 3; white-space: nowrap; }
.mark svg { width: 25px; height: 27px; }
.mark text { font: bold 10px "Noto Sans", sans-serif; fill: #777; }

/* status bar */
.status { display: flex; align-items: center; height: 19px; flex: none; background: #222b37; }
.ham { width: 26px; }
.sheets { display: flex; align-items: center; align-self: stretch; width: 175px; }
.sheets button { padding: 0 6px; align-self: stretch; }
.sheets .on { width: 32px; background: #3c4856; color: #fff; font-weight: 700; clip-path: polygon(5px 0, 100% 0, 27px 100%, 0 100%); }
.sheets i { color: #4c5865; font-style: normal; }
.coords { display: flex; align-items: center; justify-content: space-between; width: 126px; height: 15px; background: #343f4e; padding-left: 1px; }
.modes { flex: 1; display: flex; align-items: center; align-self: stretch; background: #303a47; }
.modes button { width: 15px; height: 15px; }
.modes .txt { width: 20px; padding-left: 4px; font-weight: 700; }
.modes .hl { background: #5d91c2; border: 1px solid #303a47; }
.modes .scale { width: 36px; justify-content: flex-end; }
.units { display: flex; align-items: center; flex: 1; padding-left: 3px; }
.units select { flex: 1; }
.modes .dimmer { color: #77838f; opacity: .8; }
```
